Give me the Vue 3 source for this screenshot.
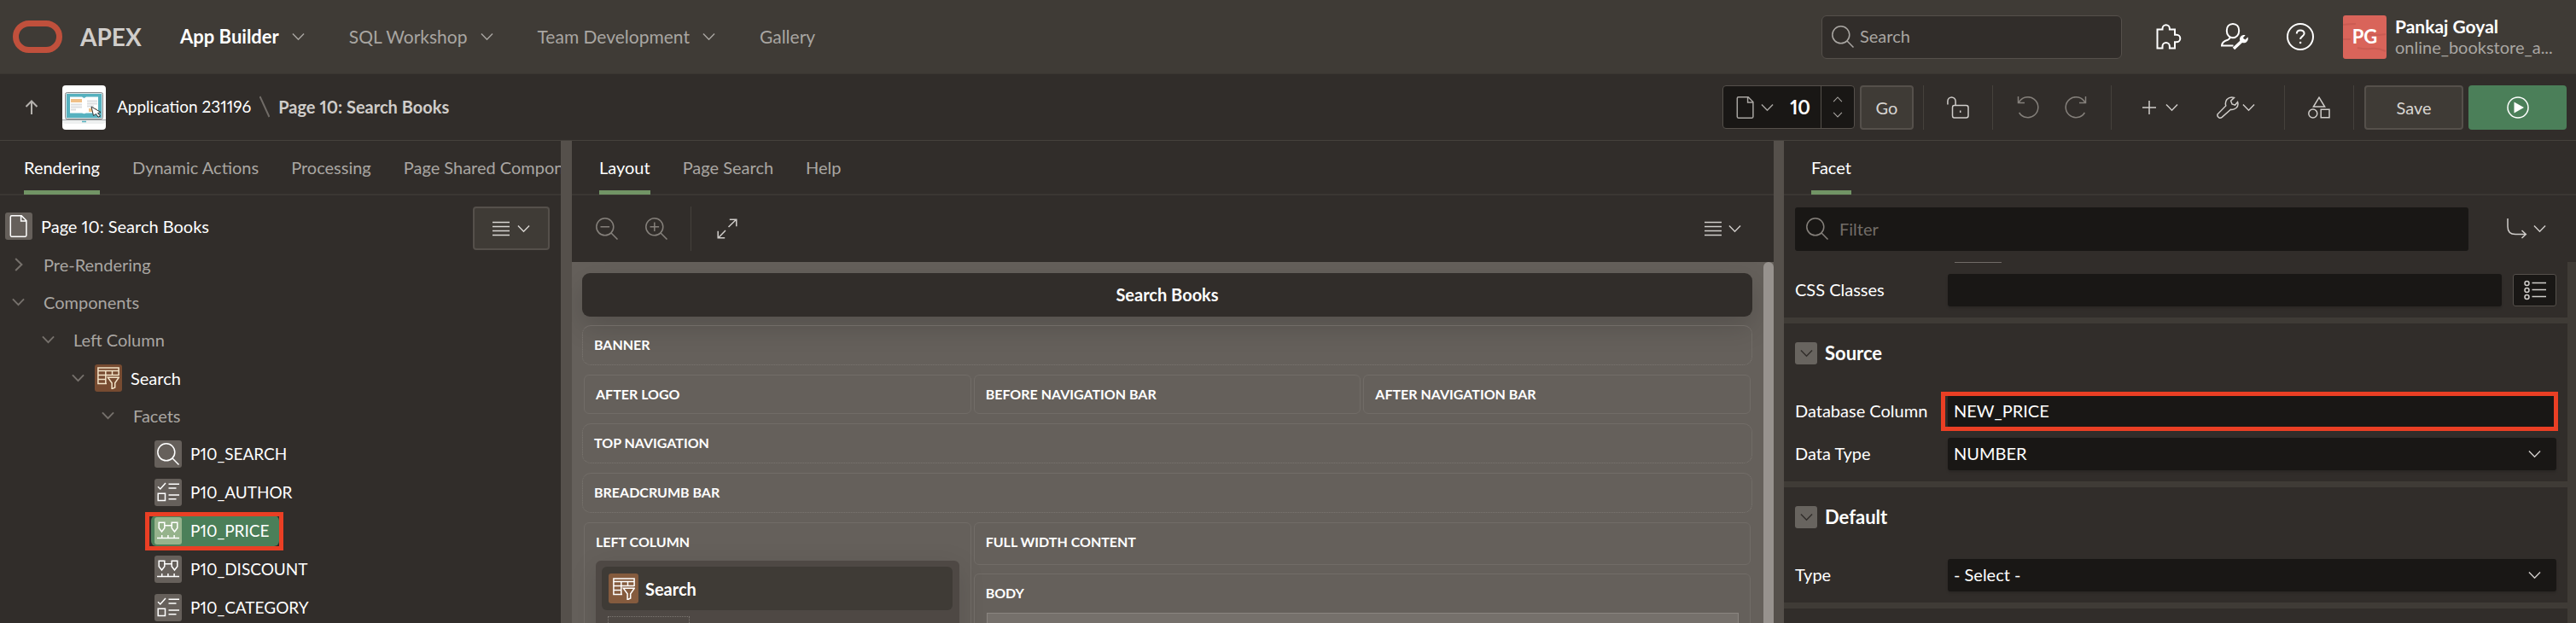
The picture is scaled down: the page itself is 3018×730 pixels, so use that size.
<script setup>
import { ref } from 'vue'

const mainNav = [
  { label: 'App Builder', menu: true, active: true },
  { label: 'SQL Workshop', menu: true },
  { label: 'Team Development', menu: true },
  { label: 'Gallery', menu: false },
]
const treeTabs = ['Rendering', 'Dynamic Actions', 'Processing', 'Page Shared Components']
const layoutTabs = ['Layout', 'Page Search', 'Help']

const tree = [
  { label: 'Page 10: Search Books', icon: 'page', root: true },
  { label: 'Pre-Rendering', level: 0, toggle: 'right', group: true },
  { label: 'Components', level: 0, toggle: 'down', group: true },
  { label: 'Left Column', level: 1, toggle: 'down', group: true },
  { label: 'Search', level: 2, toggle: 'down', icon: 'faceted', tone: 'brown' },
  { label: 'Facets', level: 3, toggle: 'down', group: true },
  { label: 'P10_SEARCH', level: 4, icon: 'search' },
  { label: 'P10_AUTHOR', level: 4, icon: 'checks' },
  { label: 'P10_PRICE', level: 4, icon: 'range', selected: true },
  { label: 'P10_DISCOUNT', level: 4, icon: 'range' },
  { label: 'P10_CATEGORY', level: 4, icon: 'checks' },
]

const globalSearch = ref('')
const pageNumber = ref('10')
const filter = ref('')
const cssClasses = ref('')
const dbColumn = ref('NEW_PRICE')
const dataType = ref('NUMBER')
const defaultType = ref('- Select -')
</script>

<template>
  <div class="app">
    <svg class="defs" aria-hidden="true">
      <symbol id="down" viewBox="0 0 16 10"><path d="M1 1.2 8 8.4 15 1.2" /></symbol>
      <symbol id="right" viewBox="0 0 10 16"><path d="M1.2 1 8.4 8 1.2 15" /></symbol>
      <symbol id="up" viewBox="0 0 16 10"><path d="M1 8.6 8 1.4 15 8.6" /></symbol>
      <symbol id="search" viewBox="0 0 26 26"><circle cx="10.8" cy="10.8" r="10" /><path d="M17.8 17.8 25.5 25.5" /></symbol>
      <symbol id="zoomout" viewBox="0 0 26 26"><circle cx="10.8" cy="10.8" r="10" /><path d="M17.8 17.8 25.5 25.5M5.5 10.8h10.6" /></symbol>
      <symbol id="zoomin" viewBox="0 0 26 26"><circle cx="10.8" cy="10.8" r="10" /><path d="M17.8 17.8 25.5 25.5M5.5 10.8h10.6M10.8 5.5v10.6" /></symbol>
      <symbol id="page" viewBox="0 0 26 26"><path d="M4.7.8h11.5l5.7 5.7v17.3q0 1.4-1.4 1.4H4.7q-1.4 0-1.4-1.4V2.2Q3.3.8 4.7.8zM15.6.8v6.3h6.3" /></symbol>
      <symbol id="lines" viewBox="0 0 20 18"><path d="M0 1.5h20M0 6.5h20M0 11.5h20M0 16.5h20" /></symbol>
      <symbol id="list" viewBox="0 0 26 24"><circle cx="3.5" cy="4" r="2.5" /><circle cx="3.5" cy="12" r="2.5" /><circle cx="3.5" cy="20" r="2.5" /><path d="M9.5 3.5H26M9.5 11.5H26M9.5 19.5H26" /></symbol>
      <symbol id="checks" viewBox="0 0 26 26"><path d="M1 6.2 3.8 9 10 2M13.5 3.2H26M13.5 8H22.500M13.500 16H26M13.500 20.800H22.500M1.200 14.200h8.300v8.300H1.200z" /></symbol>
      <symbol id="range" viewBox="0 0 26 26"><path d="M2.200 3.200h6.600v6.500l-3.300 4.300-3.300-4.300zM17.200 3.200h6.600v6.500l-3.300 4.300-3.300-4.300zM8.800 6.800h8.400M0 21.500h26M5.700 18v3.500M12.900 18v3.500M20.100 18v3.500" /></symbol>
      <symbol id="faceted" viewBox="0 0 26 26"><path d="M11 19.500H.9V.9H25.100V10M.9 4.400h24.200M.9 9.400h24.200M.9 14.400h9M9.800 4.400v15M17.500 4.400v5M12.300 12.200h13l-4.600 6.600v5.200l-3.600 1.600v-6.800z" /></symbol>
      <symbol id="puzzle" viewBox="0 0 30 30"><path d="M1.500 6.500H7.500V5.500a4.200 4.200 0 0 1 8.400 0V6.500H22v6.200h2a4.300 4.300 0 0 1 0 8.600H22v7.200H15.900V26.200a4.200 4.200 0 0 0-8.400 0v2.300H1.500z" /></symbol>
      <symbol id="admin" viewBox="0 0 32 32"><path d="M14 1c4.600 0 7.200 3.400 7.200 8s-3 8.300-7.200 8.300S6.800 13.600 6.800 9 9.400 1 14 1zM10.500 17q-.3 2-2.500 2.700-6.800 1.800-7 6.900h13.500" /><path class="solid" d="M28.600 14.200 25.800 17.600 28.400 19.400 31.600 16.600C32.800 20.800 29.200 24.400 25 23L16.200 31.200 13.800 28.800 22.300 20.800C21 16.600 24.600 13 28.600 14.200z" /></symbol>
      <symbol id="help" viewBox="0 0 32 32"><circle cx="16" cy="16" r="15" /><path d="M11.800 12.600c0-5.400 8.800-5.400 8.800-.4 0 3.400-4.500 3.400-4.500 6.800" /><circle class="solid" cx="16.100" cy="23" r="1.300" /></symbol>
      <symbol id="arrowup" viewBox="0 0 16 18"><path d="M8 17V1.500M1.500 8 8 1.500 14.500 8" /></symbol>
      <symbol id="unlock" viewBox="0 0 26 26"><path d="M.9 9.500V5.500a4.600 4.600 0 0 1 9.200 0v5M8.500 10.500h14q2.500 0 2.500 2.500v9.500q0 2.500-2.500 2.500h-14Q6.500 25 6.500 22.500V13q0-2.500 2-2.500zM15.700 16.500v2.500" /></symbol>
      <symbol id="undo" viewBox="0 0 26 26"><path d="M2 7.500A12 12 0 1 1 2.600 19M1.500 0v7.500H9" /></symbol>
      <symbol id="redo" viewBox="0 0 26 26"><path d="M24 7.500A12 12 0 1 0 23.400 19M24.500 0v7.500H17" /></symbol>
      <symbol id="plus" viewBox="0 0 16 16"><path d="M8 0v16M0 8h16" /></symbol>
      <symbol id="wrench" viewBox="0 0 26 26"><path d="M20.500 1.400 16.600 5.300 18 9l3.600 1.100 3-3.500q1.300 4.200-1.700 6.900-3 2.500-6.400 1.800L6.200 24.300q-1.500 1.200-3.200.7-2.800-1.200-1.900-4.200L10.800 10.900Q9.500 6.800 12 3.500q3.500-3.700 8.500-2.100zM4 22v.1" /></symbol>
      <symbol id="shapes" viewBox="0 0 26 26"><path d="M13 1.200 19.600 12H6.400zM15.200 15.200H25v9.600h-9.800z" /><circle cx="5.800" cy="20" r="5" /></symbol>
      <symbol id="run" viewBox="0 0 26 26"><circle cx="13" cy="13" r="12" /><path class="solid" d="M8.500 6.500 20 13 8.500 19.500z" /></symbol>
      <symbol id="expand" viewBox="0 0 24 24"><path d="M13.500 10 22.500 1.300M14.800 1.200h8v8M10 14 1.500 22.700M9.200 22.800h-8v-8" /></symbol>
      <symbol id="goto" viewBox="0 0 24 24"><path d="M1 0v9.500q0 9 9 9H22M17.500 14 22.300 18.500 17.500 23" /></symbol>
    </svg>

    <header class="topbar">
      <a class="brand" href="#">
        <svg class="logo" viewBox="0 0 58 38"><rect x="3.500" y="3.500" width="51" height="31" rx="15.500" /></svg>
        <span>APEX</span>
      </a>
      <nav class="main-nav">
        <a v-for="n in mainNav" :key="n.label" href="#" :class="{ active: n.active }">
          {{ n.label }}<svg v-if="n.menu" class="ic chev"><use href="#down" /></svg>
        </a>
      </nav>
      <div class="top-right">
        <label class="global-search">
          <svg class="ic i26"><use href="#search" /></svg>
          <input v-model="globalSearch" type="text" placeholder="Search" aria-label="Search" />
        </label>
        <button class="top-btn first" aria-label="Extensions"><svg class="ic i30"><use href="#puzzle" /></svg></button>
        <button class="top-btn" aria-label="Administration"><svg class="ic i32"><use href="#admin" /></svg></button>
        <button class="top-btn" aria-label="Help menu"><svg class="ic i32"><use href="#help" /></svg></button>
        <button class="user">
          <span class="avatar">
            <svg viewBox="0 0 51 51"><path d="M0 11q8-1 15-1M0 28h9M28 22q12 2 22 0M17 38q8 2 16 1t17 3" /></svg>
            <b>PG</b>
          </span>
          <span class="who"><b>Pankaj Goyal</b><span>online_bookstore_a...</span></span>
        </button>
      </div>
    </header>

    <div class="toolbar">
      <a class="up" href="#" aria-label="Up"><svg class="ic arrow"><use href="#arrowup" /></svg></a>
      <svg class="app-icon" viewBox="0 0 51 52">
        <rect width="51" height="52" rx="4" fill="#fff" />
        <rect x="3.500" y="8.500" width="44" height="31" rx="2" fill="#d8e4e6" stroke="#85898b" />
        <rect x="5" y="10" width="41" height="28" fill="#56b1bf" />
        <path d="M9 13.500h14l2.500 1.500 2.500-1.500h14v19H28l-2.500.800-2.500-.8H9z" fill="#fff" />
        <path d="M10 16h13v4H10z M31 27h9v4h-9z" fill="#f0c088" />
        <path d="M10 22.500h13M10 25.500h13M10 28.500h6M29 18.500h12M29 21.500h12M29 24.500h8" stroke="#dcdee0" stroke-width="2" />
        <path d="M34 25 45 31.500 41.500 32.500 44.500 36 42 37.200 39.500 33.500 36.500 35.500z" fill="#fff" stroke="#333" />
        <path d="M0 40h51v3q-1 2-4 2H4q-3 0-4-2z" fill="#eef0f0" />
        <path d="M0 40.500h51" stroke="#a0a3a5" />
        <path d="M23 42.500h5" stroke="#56b1bf" stroke-width="1.500" />
      </svg>
      <nav class="crumbs">
        <a href="#">Application 231196</a>
        <svg class="slash" viewBox="0 0 12 26"><path d="M.5 1 11.500 25" /></svg>
        <b>Page 10: Search Books</b>
      </nav>
      <div class="tools">
        <div class="page-select">
          <button class="page-menu" aria-label="Page list">
            <svg class="ic i26"><use href="#page" /></svg><svg class="ic chev"><use href="#down" /></svg>
          </button>
          <input v-model="pageNumber" type="text" aria-label="Page number" />
          <span class="spin">
            <button aria-label="Next page"><svg class="ic small"><use href="#up" /></svg></button>
            <button aria-label="Previous page"><svg class="ic small"><use href="#down" /></svg></button>
          </span>
        </div>
        <button class="btn go">Go</button>
        <i class="rule"></i>
        <button class="tool w80" aria-label="Unlock"><svg class="ic i26"><use href="#unlock" /></svg></button>
        <i class="rule"></i>
        <span class="group">
          <button class="tool w56 dim" aria-label="Undo"><svg class="ic i26"><use href="#undo" /></svg></button>
          <button class="tool w56 dim" aria-label="Redo"><svg class="ic i26"><use href="#redo" /></svg></button>
        </span>
        <i class="rule"></i>
        <span class="group">
          <button class="tool w88 wide-gap" aria-label="Create"><svg class="ic i16"><use href="#plus" /></svg><svg class="ic chev"><use href="#down" /></svg></button>
          <button class="tool w88" aria-label="Utilities"><svg class="ic i26"><use href="#wrench" /></svg><svg class="ic chev"><use href="#down" /></svg></button>
        </span>
        <i class="rule"></i>
        <button class="tool w80" aria-label="Shared components"><svg class="ic i26"><use href="#shapes" /></svg></button>
        <i class="rule"></i>
        <button class="btn save">Save</button>
        <button class="btn run" aria-label="Save and run page"><svg class="ic i26"><use href="#run" /></svg></button>
      </div>
    </div>

    <main class="panes">
      <section class="pane tree-pane">
        <div class="tabs">
          <a v-for="(t, i) in treeTabs" :key="t" href="#" :class="{ active: i === 0 }">{{ t }}</a>
        </div>
        <div class="tree-body">
          <ul class="tree">
            <li v-for="n in tree" :key="n.label" :class="['l' + (n.level ?? 'root'), { group: n.group }]">
              <span v-if="!n.root" class="toggle">
                <svg v-if="n.toggle" :class="['ic', n.toggle === 'right' ? 'chev-r' : 'chev']"><use :href="'#' + n.toggle" /></svg>
              </span>
              <span :class="['item', { selected: n.selected }]">
                <span v-if="n.icon" :class="['node-icon', n.tone]"><svg class="ic i26"><use :href="'#' + n.icon" /></svg></span>
                {{ n.label }}
              </span>
            </li>
          </ul>
          <button class="btn tree-menu" aria-label="Tree menu"><svg class="ic lines"><use href="#lines" /></svg><svg class="ic chev"><use href="#down" /></svg></button>
        </div>
      </section>

      <div class="splitter"></div>

      <section class="pane layout-pane">
        <div class="tabs">
          <a v-for="(t, i) in layoutTabs" :key="t" href="#" :class="{ active: i === 0 }">{{ t }}</a>
        </div>
        <div class="layout-tools">
          <button class="tool w58 dim" aria-label="Zoom out"><svg class="ic i26"><use href="#zoomout" /></svg></button>
          <button class="tool w58 dim" aria-label="Zoom in"><svg class="ic i26"><use href="#zoomin" /></svg></button>
          <i class="rule"></i>
          <button class="tool w80" aria-label="Expand"><svg class="ic i24"><use href="#expand" /></svg></button>
          <button class="tool layout-menu" aria-label="Layout menu"><svg class="ic lines"><use href="#lines" /></svg><svg class="ic chev"><use href="#down" /></svg></button>
        </div>
        <div class="canvas">
          <div class="canvas-body">
            <h2 class="page-title">Search Books</h2>
            <div class="region wide">BANNER</div>
            <div class="cols">
              <div class="region">AFTER LOGO</div>
              <div class="region">BEFORE NAVIGATION BAR</div>
              <div class="region">AFTER NAVIGATION BAR</div>
            </div>
            <div class="region wide">TOP NAVIGATION</div>
            <div class="region wide">BREADCRUMB BAR</div>
            <div class="cols tall">
              <div class="region column">
                LEFT COLUMN
                <div class="card">
                  <div class="card-head">
                    <span class="card-icon"><svg class="ic i26"><use href="#faceted" /></svg></span>Search
                  </div>
                  <div class="slot"></div>
                </div>
              </div>
              <div class="stack">
                <div class="region full">FULL WIDTH CONTENT</div>
                <div class="region column">
                  BODY
                  <div class="body-slot"></div>
                </div>
              </div>
            </div>
          </div>
          <div class="scrollbar"></div>
        </div>
      </section>

      <div class="splitter"></div>

      <section class="pane prop-pane">
        <div class="tabs"><a href="#" class="active">Facet</a></div>
        <div class="filter-row">
          <label class="filter">
            <svg class="ic i26"><use href="#search" /></svg>
            <input v-model="filter" type="text" placeholder="Filter" aria-label="Filter" />
          </label>
          <button class="tool goto" aria-label="Go to group"><svg class="ic i24"><use href="#goto" /></svg><svg class="ic chev"><use href="#down" /></svg></button>
        </div>
        <div class="props">
          <div class="group-box">
            <div class="cut-line"></div>
            <div class="field">
              <label for="css">CSS Classes</label>
              <div class="with-button">
                <input id="css" v-model="cssClasses" type="text" />
                <button class="pick" aria-label="Pick CSS class"><svg class="ic list"><use href="#list" /></svg></button>
              </div>
            </div>
          </div>
          <div class="group-box">
            <h3><button aria-label="Collapse Source"><svg class="ic chev"><use href="#down" /></svg></button>Source</h3>
            <div class="field">
              <label for="dbcol">Database Column</label>
              <div class="control marked"><input id="dbcol" v-model="dbColumn" type="text" /></div>
            </div>
            <div class="field">
              <label for="dtype">Data Type</label>
              <div class="control">
                <select id="dtype" v-model="dataType"><option>NUMBER</option></select>
                <svg class="ic chev arrow-down"><use href="#down" /></svg>
              </div>
            </div>
          </div>
          <div class="group-box">
            <h3><button aria-label="Collapse Default"><svg class="ic chev"><use href="#down" /></svg></button>Default</h3>
            <div class="field">
              <label for="deftype">Type</label>
              <div class="control">
                <select id="deftype" v-model="defaultType"><option>- Select -</option></select>
                <svg class="ic chev arrow-down"><use href="#down" /></svg>
              </div>
            </div>
          </div>
        </div>
      </section>
    </main>
  </div>
</template>

<style>
body { margin: 0; background: #312d2a; }
</style>

<style scoped>
.app {
  height: 100vh;
  display: flex;
  flex-direction: column;
  overflow: hidden;
  background: #312d2a;
  color: #fff;
  font: 20px/24px Lato, "Liberation Sans", sans-serif;
  font-variant-numeric: proportional-nums;
}
.app *, .app *::before, .app *::after { box-sizing: border-box; }
.defs { position: absolute; width: 0; height: 0; }
a { color: inherit; text-decoration: none; }
button { font: inherit; color: inherit; background: none; border: 0; padding: 0; margin: 0; display: flex; align-items: center; justify-content: center; flex: none; }
input, select { font: inherit; color: inherit; border: 0; outline: 0; min-width: 0; width: 100%; }
b, h2, h3 { font-weight: 700; margin: 0; }

.ic { fill: none; stroke: currentColor; stroke-width: 1.500; flex: none; overflow: visible; display: block; }
.solid { fill: currentColor; stroke: none; }
.i16 { width: 16px; height: 16px; }
.i24 { width: 24px; height: 24px; }
.i26 { width: 26px; height: 26px; }
.i30 { width: 30px; height: 30px; stroke-width: 2; }
.i32 { width: 32px; height: 32px; stroke-width: 2; }
.chev { width: 15px; height: 10px; }
.chev-r { width: 10px; height: 16px; }
.small { width: 12px; height: 7px; }
.arrow { width: 16px; height: 18px; stroke-width: 2; }
.lines { width: 20px; height: 18px; }
.list { width: 26px; height: 24px; }

.topbar { display: flex; align-items: center; height: 86px; flex: none; padding: 0 12px 0 15px; background: #3f3b36; }
.brand { display: flex; align-items: center; gap: 21px; font-size: 28px; line-height: 32px; font-weight: 700; color: #d0cdca; width: 196px; }
.logo { width: 58px; height: 38px; fill: none; stroke: #c0503c; stroke-width: 7; }
.main-nav { display: flex; gap: 52px; font-size: 21px; color: #a9a6a2; }
.main-nav a { display: flex; align-items: center; gap: 15px; white-space: nowrap; }
.main-nav .active { color: #fff; font-weight: 700; font-size: 22px; }
.main-nav .chev { color: #a9a6a2; }
.top-right { margin-left: auto; display: flex; align-items: center; }
.global-search { display: flex; align-items: center; gap: 7px; width: 352px; height: 51px; padding: 0 11px; background: #312d2a; border: 1px solid #55504b; border-radius: 6px; color: #a9a6a2; }
.global-search input { background: none; color: #fff; padding: 0 0 2px; }
.global-search input::placeholder { color: #a9a6a2; opacity: 1; }
.top-btn { width: 77px; height: 51px; }
.top-btn.first { margin-left: 16px; }
.user { margin-left: 12px; text-align: left; gap: 10px; }
.avatar { position: relative; width: 51px; height: 51px; border-radius: 3px; background: #d9645a; display: flex; align-items: center; justify-content: center; font-size: 22px; overflow: hidden; }
.avatar svg { position: absolute; inset: 0; fill: none; stroke: #bf554d; stroke-width: 2; opacity: .5; }
.avatar b { position: relative; }
.who { display: flex; flex-direction: column; width: 200px; line-height: 25px; white-space: nowrap; }
.who b { font-size: 21px; }
.who span { color: #a9a6a2; }

.toolbar { display: flex; align-items: center; height: 79px; flex: none; padding: 0 11px 0 29px; border-top: 1px solid #393531; border-bottom: 1px solid #45413c; }
.up { width: 44px; color: #b5b2ae; }
.app-icon { width: 51px; height: 52px; flex: none; margin-right: 13px; }
.crumbs { display: flex; align-items: center; gap: 10px; padding-bottom: 2px; white-space: nowrap; }
.crumbs a { font-size: 19px; }
.crumbs b { color: #d0cdca; }
.slash { width: 12px; height: 26px; stroke: #716c67; stroke-width: 2; }
.tools { margin-left: auto; display: flex; align-items: center; color: #d0cdca; }
.page-select { display: flex; width: 155px; height: 51px; margin-right: 6px; background: #191715; border: 1px solid #55504b; border-radius: 4px; overflow: hidden; }
.page-menu { width: 72px; gap: 5px; color: #a9a6a2; }
.page-select input { flex: 1; background: none; color: #fff; font-size: 22px; font-weight: 700; text-align: right; padding: 0 12px 0 0; font-variant-numeric: proportional-nums; }
.spin { width: 39px; display: flex; flex-direction: column; align-items: center; justify-content: space-evenly; border-left: 1px solid #55504b; color: #a9a6a2; flex: none; }
.btn { height: 52px; border: 2px solid #55504b; border-radius: 4px; background: #3f3b36; color: #d8d5d2; }
.go { width: 63px; margin-right: 11px; }
.save { width: 116px; margin: 0 6px 0 12px; }
.run { width: 115px; border: 0; background: #4b7f59; color: #fff; }
.rule { width: 1px; height: 52px; flex: none; background: #45413c; }
.tool { height: 51px; color: #d0cdca; gap: 4px; }
.wide-gap { gap: 11px; }
.dim { color: #85807b; }
.w56 { width: 56px; }
.w58 { width: 58px; }
.w80 { width: 80px; }
.w88 { width: 88px; }
.tools .group { display: flex; padding: 0 13px; }

.panes { flex: 1; min-height: 0; display: grid; grid-template-columns: 657fr 13px 1408fr 12px 928fr; }
.pane { min-width: 0; min-height: 0; overflow: hidden; display: flex; flex-direction: column; }
.splitter { background: #55504b; }
.tabs { display: flex; gap: 38px; height: 64px; flex: none; padding: 0 28px; border-bottom: 2px solid #3b3733; color: #a9a6a2; white-space: nowrap; }
.tabs a { display: flex; align-items: center; height: 63px; border-bottom: 5px solid transparent; border-top: 3px solid transparent; }
.tabs .active { color: #fff; border-bottom-color: #719465; }
.layout-pane .tabs, .prop-pane .tabs { padding: 0 32px; }

.tree-body { display: flex; justify-content: space-between; align-items: flex-start; padding: 13px 13px 0 6px; }
.tree { list-style: none; margin: 0; padding: 0; white-space: nowrap; }
.tree li { display: flex; align-items: center; height: 45px; }
.tree li.group { height: 44px; color: #a9a6a2; }
.toggle { width: 31px; display: flex; justify-content: center; color: #76716c; flex: none; }
.toggle .ic { stroke-width: 2; }
.item { position: relative; display: flex; align-items: center; gap: 10px; height: 36px; padding: 0 12px 0 4px; border-radius: 6px; }
.lroot .item { padding-left: 0; }
.group .item { padding-left: 14px; }
.l1 { margin-left: 35px; }
.l2 { margin-left: 70px; }
.l3 { margin-left: 105px; }
.l4 { margin-left: 140px; font-size: 19px; }
.tree li.l0:nth-child(2) { height: 45px; }
.node-icon { width: 32px; height: 32px; border-radius: 3px; background: #66605b; display: flex; align-items: center; justify-content: center; }
.node-icon.brown { background: #774b31; color: #f2e3c8; }
.selected { background: #4b7f59; }
.selected .node-icon { background: #96b38c; }
.selected::after { content: ""; position: absolute; inset: -4px -5px -5px -7px; border: 5px solid #ea3f24; }
.tree-menu { width: 90px; height: 51px; gap: 9px; }

.layout-tools { display: flex; align-items: center; height: 78px; flex: none; padding: 0 28px 0 12px; }
.layout-tools .rule { margin: 0 2px 0 11px; }
.layout-menu { margin-left: auto; width: 64px; gap: 8px; }
.canvas { flex: 1; min-height: 0; display: flex; background: #65605b; }
.canvas-body { flex: 1; min-width: 0; padding: 13px 13px 0 12px; display: flex; flex-direction: column; overflow: hidden; }
.scrollbar { width: 12px; background: #97928e; border-radius: 6px 6px 0 0; }
.page-title { height: 51px; flex: none; margin-bottom: 10px; border-radius: 9px; background: #312d2a; font-size: 20px; line-height: 51px; text-align: center; box-shadow: 0 12px 32px rgba(0, 0, 0, .16); }
.region { height: 46px; flex: none; padding: 0 13px; border: 1px solid #716c67; border-radius: 6px; font-size: 16px; line-height: 44px; font-weight: 700; }
.region.wide { height: 47px; border-style: dotted; border-color: #7d7873; border-top: 1px solid #716c67; border-radius: 10px; margin-bottom: 11px; }
.cols { display: grid; grid-template-columns: repeat(3, 1fr); gap: 3px; padding: 0 2px; margin-bottom: 11px; }
.cols.tall { flex: 1; min-height: 0; margin: 0; }
.stack { grid-column: span 2; display: flex; flex-direction: column; gap: 10px; }
.region.full { height: 50px; }
.region.column { height: 160px; }
.card { height: 120px; padding: 7px 8px 0 7px; border-radius: 6px; background: #4e4844; box-shadow: 0 8px 32px rgba(0, 0, 0, .12); }
.card-head { display: flex; align-items: center; gap: 8px; height: 51px; padding-left: 8px; border-radius: 6px; background: #3f3b36; font-size: 20px; }
.card-icon { width: 35px; height: 35px; border-radius: 3px; background: #855b3e; display: flex; align-items: center; justify-content: center; }
.slot { width: 96px; height: 50px; margin: 7px 0 0 7px; border: 1px dotted #7d7873; }
.body-slot { height: 80px; margin: 1px 0 0 1px; border: 1px solid #8a8580; background: #75706b; }

.filter-row { display: flex; align-items: center; height: 78px; flex: none; padding-left: 13px; }
.filter { flex: 1; display: flex; align-items: center; gap: 13px; height: 51px; padding: 0 13px; border-radius: 3px; background: #191715; color: #85807b; }
.filter input { background: none; padding: 0; color: #fff; }
.filter input::placeholder { color: #716c67; opacity: 1; }
.goto { width: 100px; margin: 0 8px 0 18px; gap: 7px; }
.props { flex: 1; min-height: 0; border-right: 10px solid #3f3b36; overflow: hidden; }
.group-box { padding: 0 13px 13px; border-bottom: 7px solid #3f3b36; }
.cut-line { width: 55px; height: 1px; margin: 0 0 13px 187px; background: #716c67; }
.group-box h3 { display: flex; align-items: center; gap: 9px; height: 70px; margin-bottom: 14px; font-size: 22px; }
.group-box h3 button { width: 26px; height: 26px; border-radius: 3px; background: #68645f; color: #312d2a; }
.field { display: grid; grid-template-columns: 179px 1fr; align-items: center; }
.field + .field { margin-top: 12px; }
.field label { padding-bottom: 2px; white-space: nowrap; }
.field input, .field select { display: block; height: 38px; padding: 0 7px 2px; border-radius: 3px; background: #191715; box-shadow: 0 2px 3px rgba(0, 0, 0, .15); appearance: none; }
.control { position: relative; }
.arrow-down { position: absolute; right: 18px; top: 14px; color: #d0cdca; pointer-events: none; }
.marked::after { content: ""; position: absolute; inset: -4px -2px -4px -8px; border: 5px solid #ea3f24; pointer-events: none; }
.with-button { display: flex; gap: 13px; }
.pick { width: 51px; height: 38px; border: 1px solid #55504b; border-radius: 3px; background: #191715; color: #d0cdca; }
</style>
